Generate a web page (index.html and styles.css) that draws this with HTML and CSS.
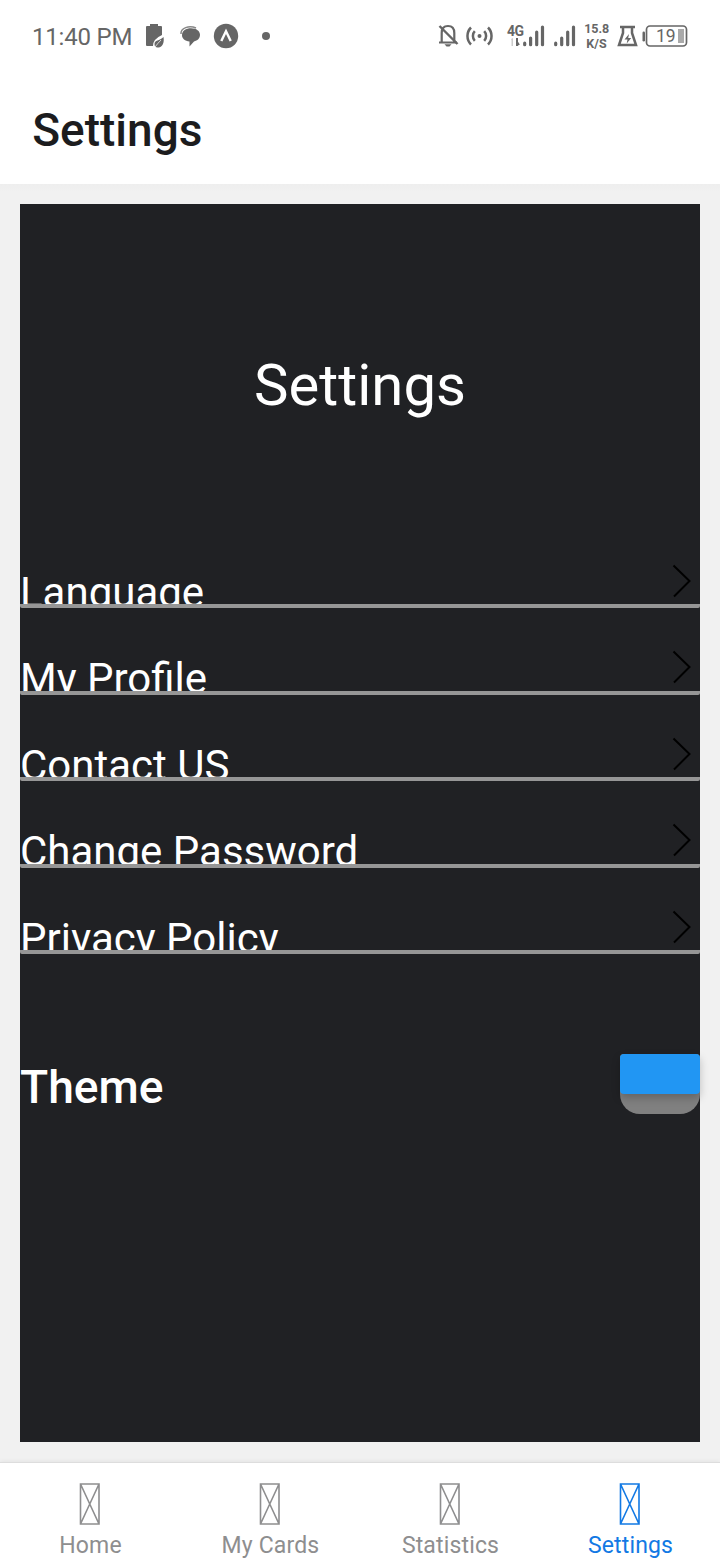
FILE: index.html
```html
<!DOCTYPE html>
<html lang="en">
<head>
<meta charset="utf-8">
<title>Settings</title>
<link rel="stylesheet" href="styles.css">
</head>
<body>
<div class="screen">
  <div class="status">
    <span class="clock">11:40 PM</span>
    <svg class="notices" width="130" height="30" viewBox="144 21 130 30" fill="#666">
      <path d="M147 26h3v-2h8v2h3q1 0 1 1v8q-9 4-9 11h-6q-1 0-1-1V27q0-1 1-1z"/>
      <path d="M163.500 37c1 6-1 10-5 10.500q-4 .5-4-3.500c0-4 5-3 9-7z"/>
      <path d="M155 47q3-4 6-7" fill="none" stroke="#fff" stroke-width=".7"/>
      <path d="M181 34c-.5-6 8-9 15-6" fill="none" stroke="#888" stroke-width="1.500"/>
      <path d="M191 28.300c5.500 0 9 2.900 9 6.500s-2.500 6-6 6.700l-4.500 5v-5c-4.500-.5-7.500-3-7.500-6.300 0-4.300 4-6.900 9-6.900z"/>
      <circle cx="226" cy="36" r="12.200"/>
      <path d="M221.300 41l4.700-9.800 4.700 9.800" fill="none" stroke="#fff" stroke-width="2.400"/>
      <circle cx="266" cy="36" r="4"/>
    </svg>
    <svg class="signals" width="252" height="34" viewBox="436 19 252 34" fill="#666">
      <g fill="none" stroke="#666" stroke-width="2.200">
        <path d="M439 42.500h18M441.700 42V33c0-4.500 2.500-7 6.300-7s6.300 2.500 6.300 7v9"/>
        <path d="M439.500 26l18 18" stroke-width="2.400"/>
        <path d="M474.800 31.200a7 7 0 0 0 0 9.600M484.200 31.200a7 7 0 0 1 0 9.600M471 27.500a12 12 0 0 0 0 17M488 27.500a12 12 0 0 1 0 17" stroke-width="2.500"/>
      </g>
      <path d="M444.500 44.200h7l-2 2.300h-3z"/>
      <circle cx="479.500" cy="36" r="2"/>
      <text x="507" y="36" class="net" textLength="17">4G</text>
      <path d="M511 39l2-1v8h-1.500v-6z" fill="#ccc"/>
      <path d="M517 38v8M517 42l2 3" fill="none" stroke="#666" stroke-width="2"/>
      <g fill="none" stroke="#666" stroke-width="3.200" stroke-linecap="round">
        <path d="M524.700 43.200v1.500M530.600 38v6.700M536.700 32v12.700M542.500 27v17.700"/>
        <path d="M555.700 43.200v1.500M561.700 38v6.700M567.700 32v12.700M573.500 27v17.700"/>
      </g>
      <text x="596.700" y="33" class="speed" text-anchor="middle">15.8</text>
      <text x="596.500" y="48" class="speed" text-anchor="middle">K/S</text>
      <path d="M620 27h15M623 27v6l-4 12h17l-4-12v-6" fill="none" stroke="#666" stroke-width="2.500"/>
      <path d="M629 34l-4.500 5.500h3l-.8 4 4.500-5.500h-3z"/>
      <rect x="642.500" y="31.500" width="2.500" height="10" rx="1.200"/>
      <rect x="646.500" y="26" width="40" height="20" rx="3.500" fill="none" stroke="#666" stroke-width="1.700"/>
      <rect x="678" y="29" width="6" height="14" fill="#aaa"/>
      <text x="656" y="42" class="charge">19</text>
    </svg>
  </div>
  <header class="header">Settings</header>
  <main class="page">
    <section class="panel">
      <h1 class="title">Settings</h1>
      <div class="list">
        <div class="row"><span class="label">Language</span><svg class="chevron" width="20" height="34" viewBox="0 0 20 34"><path d="M1.500 1.500L17.500 17 2 32.500"/></svg></div>
        <div class="row"><span class="label">My Profile</span><svg class="chevron" width="20" height="34" viewBox="0 0 20 34"><path d="M1.500 1.500L17.500 17 2 32.500"/></svg></div>
        <div class="row"><span class="label">Contact US</span><svg class="chevron" width="20" height="34" viewBox="0 0 20 34"><path d="M1.500 1.500L17.500 17 2 32.500"/></svg></div>
        <div class="row"><span class="label">Change Password</span><svg class="chevron" width="20" height="34" viewBox="0 0 20 34"><path d="M1.500 1.500L17.500 17 2 32.500"/></svg></div>
        <div class="row"><span class="label">Privacy Policy</span><svg class="chevron" width="20" height="34" viewBox="0 0 20 34"><path d="M1.500 1.500L17.500 17 2 32.500"/></svg></div>
      </div>
      <div class="theme">
        <span class="theme-label">Theme</span>
        <div class="toggle"><div class="thumb"></div></div>
      </div>
    </section>
  </main>
  <nav class="tabs">
    <div class="tab"><svg width="22" height="42" viewBox="0 0 22 42"><path d="M1.500 1h18.500v40H1.500zL20 41M20 1L1.500 41"/></svg><span>Home</span></div>
    <div class="tab"><svg width="22" height="42" viewBox="0 0 22 42"><path d="M1.500 1h18.500v40H1.500zL20 41M20 1L1.500 41"/></svg><span>My Cards</span></div>
    <div class="tab"><svg width="22" height="42" viewBox="0 0 22 42"><path d="M1.500 1h18.500v40H1.500zL20 41M20 1L1.500 41"/></svg><span>Statistics</span></div>
    <div class="tab active"><svg width="22" height="42" viewBox="0 0 22 42"><path d="M1.500 1h18.500v40H1.500zL20 41M20 1L1.500 41"/></svg><span>Settings</span></div>
  </nav>
</div>
</body>
</html>
```
FILE: styles.css
```css
* { box-sizing: border-box; }
body { margin: 0; font-family: Roboto, sans-serif; }
.screen { width: 720px; height: 1560px; display: flex; flex-direction: column; background: #f1f1f1; overflow: hidden; }
.status { height: 72px; flex: none; display: flex; align-items: center; padding: 0 32px; background: #fff; color: #666; }
.clock { width: 112px; padding-top: 2px; font-size: 24px; line-height: 30px; letter-spacing: -.2px; white-space: nowrap; }
.signals { margin-left: auto; }
.net { font-size: 14px; font-weight: 700; }
.speed { font-size: 12.5px; font-weight: 700; }
.charge { font-size: 17.5px; }
.header { height: 112px; flex: none; padding: 4px 32px 0 32.200px; background: #fff; color: #1c1c1e; font-size: 46px; font-weight: 500; line-height: 108px; }
.page { flex: 1; padding: 20px; background: linear-gradient(#eee, #f1f1f1 8px); }
.panel { height: 1238px; background: #202124; color: #fff; }
.title { margin: 0; height: 317.500px; padding-top: 146px; text-align: center; font-size: 58px; font-weight: 400; line-height: 70px; }
.row { height: 86.500px; display: flex; justify-content: space-between; border-bottom: 4px solid #969696; border-radius: 2px; overflow: hidden; }
.label { padding-top: 46px; font-size: 42px; line-height: 50px; white-space: nowrap; }
.chevron { margin: 42px 8px 0 0; fill: none; stroke: #000; stroke-width: 2; flex: none; }
.theme { margin-top: 100px; height: 60px; display: flex; justify-content: space-between; }
.theme-label { padding-top: 6px; font-size: 46.200px; font-weight: 500; line-height: 54px; }
.toggle { width: 80px; height: 60px; border-radius: 4px 4px 20px 20px; background: #808080; }
.thumb { height: 40px; border-radius: 4px; background: #2196f3; box-shadow: 0 4px 8px rgba(0, 0, 0, .22); }
.tabs { height: 98px; flex: none; display: flex; background: #fff; border-top: 1px solid #ddd; box-shadow: 0 -1px 4px rgba(0, 0, 0, .06); }
.tab { flex: 1; display: flex; flex-direction: column; align-items: center; padding-top: 20px; color: #8e8e8f; font-size: 23px; line-height: 28px; letter-spacing: .15px; }
.tab svg { fill: none; stroke: currentColor; stroke-width: 1.600; margin-bottom: 7px; }
.tab span { padding-left: 1px; }
.active { color: #1279e4; }
```
